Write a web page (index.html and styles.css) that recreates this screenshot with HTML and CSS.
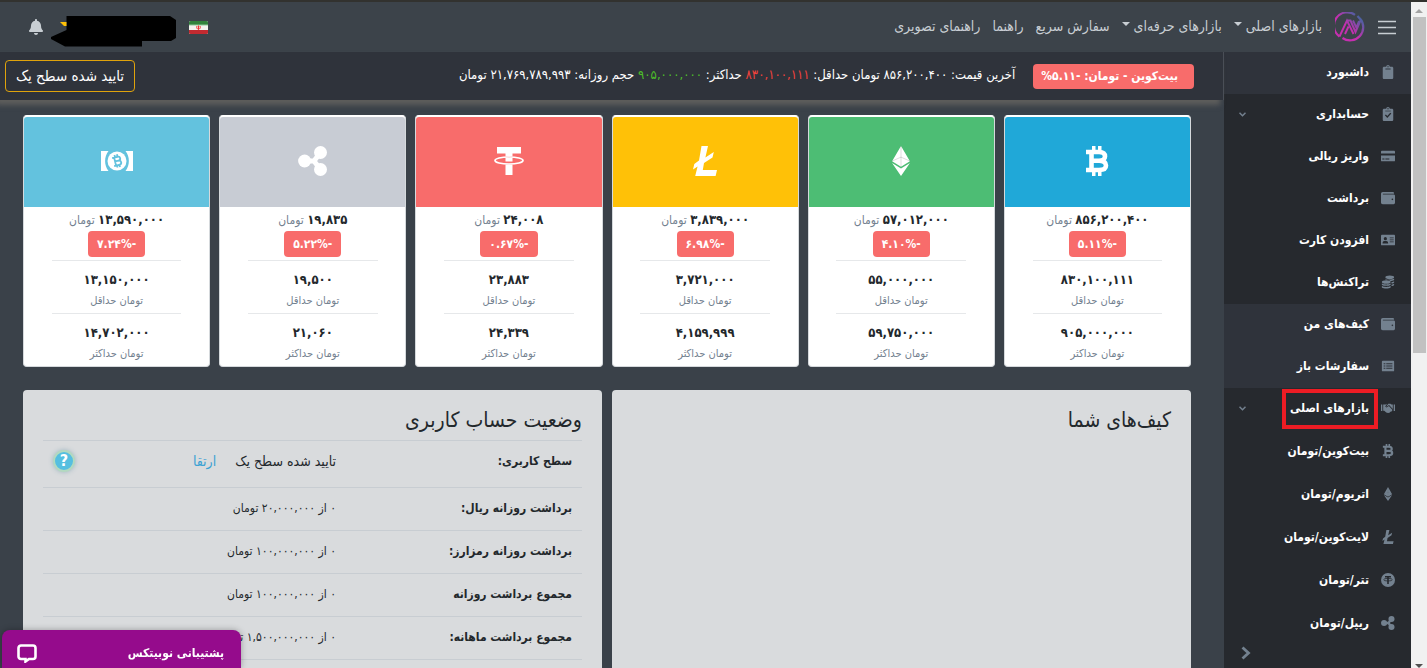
FILE: index.html
```html
<!DOCTYPE html>
<html lang="fa" dir="rtl">
<head>
<meta charset="utf-8">
<title>داشبورد</title>
<link rel="stylesheet" href="styles.css">
</head>
<body>
<svg class="sprite" aria-hidden="true">
  <symbol id="clipboard" viewBox="0 0 384 512"><path d="M384 112v352c0 26.500-21.500 48-48 48H48c-26.500 0-48-21.500-48-48V112c0-26.500 21.500-48 48-48h80c0-35.300 28.700-64 64-64s64 28.700 64 64h80c26.500 0 48 21.500 48 48zM192 40c-13.300 0-24 10.700-24 24s10.700 24 24 24 24-10.700 24-24-10.700-24-24-24m96 114v-20a6 6 0 0 0-6-6H102a6 6 0 0 0-6 6v20a6 6 0 0 0 6 6h180a6 6 0 0 0 6-6z"/></symbol>
  <symbol id="wallet" viewBox="0 0 512 512"><path d="M461.200 128H80c-8.840 0-16-7.160-16-16s7.160-16 16-16h384c8.840 0 16-7.160 16-16 0-26.510-21.490-48-48-48H64C28.650 32 0 60.650 0 96v320c0 35.350 28.650 64 64 64h397.200c28.020 0 50.800-21.530 50.800-48V176c0-26.470-22.780-48-50.800-48zM416 336c-17.670 0-32-14.330-32-32s14.330-32 32-32 32 14.330 32 32-14.330 32-32 32z"/></symbol>
  <symbol id="btc" viewBox="0 0 24 30"><path d="M1 6H14C18.500 6 20 8.200 20 10.500S18 14.700 14 14.700H8M14 14.700C19.500 14.700 21 17 21 19.500S19 24 14 24H1M6.500 6V24" fill="none" stroke="currentColor" stroke-width="4.600"/><path d="M7 0h3.500v6H7zM13 0h3.500v6H13zM7 24h3.500v6H7zM13 24h3.500v6H13z"/></symbol>
  <symbol id="eth" viewBox="0 0 320 512"><path d="M311.900 260.800L160 353.600 8 260.800 160 0zM160 383.400L8 290.600 160 512l152-221.400z"/><path d="M160 0v353M14 255l146-65 146 65" fill="none" stroke="#26292e" stroke-opacity=".2" stroke-width="14"/></symbol>
  <symbol id="ltc" viewBox="0 0 24 30"><path d="M8.500 0H15L12.400 11.400 20.800 6 19.500 11.400 11 17 9.800 24H24L22.600 30H2.200L4.600 20.500 0 23.500 1.300 18 6 14.500z"/></symbol>
  <symbol id="xrp" viewBox="0 0 30 30"><path d="M7 15H17M16 15L22.500 6.500M16 15L22.500 23.500" fill="none" stroke="currentColor" stroke-width="5"/><circle cx="6.600" cy="15" r="6.500"/><circle cx="22.500" cy="6.500" r="6.500"/><circle cx="22.500" cy="23.500" r="6.500"/></symbol>
</svg>
<div class="window">
  <div class="scrollbar" aria-hidden="true">
    <svg width="8" height="4" viewBox="0 0 8 4"><path d="M0 4L4 0 8 4z"/></svg>
    <div class="thumb"></div>
    <svg class="down" width="8" height="4" viewBox="0 0 8 4"><path d="M0 0L4 4 8 0z"/></svg>
  </div>
  <div class="app">
    <header class="topbar">
      <button class="plain menu-btn" aria-label="منو"><svg width="18" height="15" viewBox="0 0 18 15"><path d="M0 1.500h18M0 7.500h18M0 13.500h18" stroke="currentColor" stroke-width="1.500"/></svg></button>
      <a class="logo" href="#" aria-label="نوبیتکس">
        <svg width="30" height="30" viewBox="0 0 30 30">
          <defs><linearGradient id="lg" gradientUnits="userSpaceOnUse" x1="4" y1="26" x2="26" y2="4"><stop offset="0.450" stop-color="#c62fb0"/><stop offset="1" stop-color="#3c679f"/></linearGradient></defs>
          <path d="M4.500 24.500A13.200 13.200 0 0 1 20 2.800M25 6.500A13.200 13.200 0 0 1 7.500 26M22.500 4L27 9" stroke="url(#lg)" stroke-width="2.200"/>
          <path d="M4.500 24.500L12 8.500 18.500 22M10 22l3.500-7.500M12.500 8.500h3L20.500 20 25.500 8.500M18 8.500L21.300 15.500 24 9" stroke="url(#lg)" stroke-width="1.900"/>
        </svg>
      </a>
      <nav class="nav">
        <a class="drop" href="#">بازارهای اصلی</a>
        <a class="drop" href="#">بازارهای حرفه‌ای</a>
        <a href="#">سفارش سریع</a>
        <a href="#">راهنما</a>
        <a href="#">راهنمای تصویری</a>
      </nav>
      <div class="account">
        <svg class="flag" width="19" height="13" viewBox="0 0 19 13"><rect width="19" height="13" rx="1.500" fill="#f4f2ee"/><path d="M1.500 0h16a1.500 1.500 0 0 1 1.500 1.500V4H0V1.500A1.500 1.500 0 0 1 1.500 0z" fill="#31823b"/><path d="M0 9h19v2.500a1.500 1.500 0 0 1-1.500 1.500h-16A1.500 1.500 0 0 1 0 11.500z" fill="#c22a30"/><path d="M0 4h19" stroke="#8fc79a"/><path d="M8 5c-.8 2 .3 3 1.500 3.500C10.700 8 11.800 7 11 5M9.500 4.500v4" stroke="#e33" fill="none"/></svg>
        <svg class="username" width="126" height="31" viewBox="0 0 126 31"><path d="M15.500 0H119L125 4V22L120 25H91V30.500H14L0 23V21L15.500 14z" fill="#000"/><path d="M9 6h6.500v4h-2.500z" fill="#ffc107"/></svg>
        <button class="plain bell" aria-label="اعلان‌ها"><svg width="14" height="16" viewBox="0 0 448 512"><path d="M224 512c35.320 0 63.970-28.650 63.970-64H160.030c0 35.350 28.650 64 63.970 64zm215.390-149.710c-19.320-20.760-55.470-51.990-55.470-154.290 0-77.700-54.480-139.900-127.940-155.160V32c0-17.670-14.320-32-31.980-32s-31.980 14.330-31.980 32v20.840C118.560 68.100 64.080 130.300 64.080 208c0 102.300-36.150 133.530-55.470 154.290-6 6.450-8.660 14.160-8.610 21.710.11 16.400 12.980 32 32.100 32h383.800c19.120 0 32-15.600 32.100-32 .05-7.550-2.610-15.270-8.610-21.710z"/></svg></button>
      </div>
    </header>
    <div class="body">
      <aside class="sidebar">
        <a class="item light" href="#"><svg class="ico"><use href="#clipboard"/></svg><span>داشبورد</span></a>
        <a class="item" href="#"><svg class="ico" viewBox="0 0 16 16"><use href="#clipboard"/><path d="M5 9l2.200 2.300L11.200 7" fill="none" stroke="#26292e" stroke-width="1.600"/><path d="M5 4h6v1H5z" /></svg><span>حسابداری</span><svg class="chev" width="7" height="5" viewBox="0 0 7 5"><path d="M.5.800l3 3 3-3"/></svg></a>
        <a class="item" href="#"><svg class="ico" viewBox="0 0 16 16"><path d="M1 2h14a1 1 0 0 1 1 1v2H0V3a1 1 0 0 1 1-1zM0 7.500h16V13a1 1 0 0 1-1 1H1a1 1 0 0 1-1-1z"/><path d="M1.500 11.500h2.500M5 11.500h4.500" stroke="#26292e" stroke-width="1.200"/></svg><span>واریز ریالی</span></a>
        <a class="item" href="#"><svg class="ico"><use href="#wallet"/></svg><span>برداشت</span></a>
        <a class="item" href="#"><svg class="ico" viewBox="0 0 16 16"><rect y="2" width="16" height="12" rx="1"/><g fill="#26292e"><circle cx="5" cy="6.500" r="1.800"/><path d="M1.800 12c0-3 1.500-3 3.200-3s3.200 0 3.200 3zM10 5h4.500v1H10zM10 7.300h4.500v1H10zM10 9.600h4.500v1H10z"/></g></svg><span>افزودن کارت</span></a>
        <a class="item" href="#"><svg class="ico" viewBox="0 0 16 16"><ellipse cx="10" cy="2.500" rx="5" ry="2"/><path d="M5 4.300c2 1.200 8 1.200 10 0v1.500c-1 1-3 1.200-4 1.200C9 5.300 6 5 5 5.300zM12 8c1.500 0 2.500-.5 3-1v1.500c-.5.700-1.500 1-3 1.200zM12 11c1.500-.2 2.500-.5 3-1v1.500c-.5.700-1.500 1-3 1.200z"/><ellipse cx="6" cy="8" rx="5" ry="2"/><path d="M1 9.800c2 1.300 8 1.300 10 0v1.500c-2 1.300-8 1.300-10 0zM1 12.700c2 1.300 8 1.300 10 0v1.500c-2 1.500-8 1.500-10 0z"/></svg><span>تراکنش‌ها</span></a>
        <a class="item light" href="#"><svg class="ico"><use href="#wallet"/></svg><span>کیف‌های من</span></a>
        <a class="item light" href="#"><svg class="ico" viewBox="0 0 16 16"><rect x="1" y="2" width="14" height="12" rx="1"/><path d="M3 5.500h2M6 5.500h7M3 8h2M6 8h7M3 10.500h2M6 10.500h7" stroke="#2f333b" stroke-width="1.200"/></svg><span>سفارشات باز</span></a>
        <a class="item" href="#"><svg class="ico" viewBox="0 0 16 16"><path d="M0 4h1.500v7.500H0zM14.500 4H16v7.500h-1.500z"/><path d="M2.500 4h2.800L7 3.200 4.800 6.200l1.600 1.200L9 5.700l4.200 4.500L12 12l-1.300.3-1 1.200L8 13.700 6 13.200 3.700 11.200H2.500zM8.300 3h2.500l1.200 1h1.500v5.200L9.200 4.700 6.300 6.500 6 6.200z"/></svg><span class="marked">بازارهای اصلی</span><svg class="chev" width="7" height="5" viewBox="0 0 7 5"><path d="M.5.800l3 3 3-3"/></svg></a>
        <a class="item sub" href="#"><svg class="ico"><use href="#btc"/></svg><span>بیت‌کوین/تومان</span></a>
        <a class="item sub" href="#"><svg class="ico"><use href="#eth"/></svg><span>اتریوم/تومان</span></a>
        <a class="item sub" href="#"><svg class="ico"><use href="#ltc"/></svg><span>لایت‌کوین/تومان</span></a>
        <a class="item sub" href="#"><svg class="ico" viewBox="0 0 14 14"><circle cx="7" cy="7" r="7"/><path d="M4 3.800h6M7 3.800V11" stroke="#26292e" stroke-width="1.600"/><ellipse cx="7" cy="6.700" rx="4.300" ry="1.300" fill="none" stroke="#26292e" stroke-width=".8"/></svg><span>تتر/تومان</span></a>
        <a class="item sub" href="#"><svg class="ico"><use href="#xrp"/></svg><span>ریپل/تومان</span></a>
        <button class="plain minimize" aria-label="جمع کردن منو"><svg width="10" height="14" viewBox="0 0 10 14"><path d="M1.500 1.500L7.500 7l-6 5.500" fill="none" stroke="currentColor" stroke-width="2.800"/></svg></button>
      </aside>
      <main class="main">
        <div class="ticker">
          <strong class="pill">بیت‌کوین - تومان: <bdi dir="ltr">%۵.۱۱-</bdi></strong>
          <p class="stats">آخرین قیمت: ۸۵۶,۲۰۰,۴۰۰ تومان حداقل: <span class="low">۸۳۰,۱۰۰,۱۱۱</span> حداکثر: <span class="high">۹۰۵,۰۰۰,۰۰۰</span> حجم روزانه: ۲۱,۷۶۹,۷۸۹,۹۹۳ تومان</p>
          <button class="level">تایید شده سطح یک</button>
        </div>
        <div class="content">
          <section class="cards">
            <article class="card">
              <div class="head blue"><svg width="24" height="30"><use href="#btc"/></svg></div>
              <p class="price"><b>۸۵۶,۲۰۰,۴۰۰</b> تومان</p>
              <span class="badge" dir="ltr">۵.۱۱%-</span>
              <div class="stat"><b>۸۳۰,۱۰۰,۱۱۱</b><small>تومان حداقل</small></div>
              <div class="stat"><b>۹۰۵,۰۰۰,۰۰۰</b><small>تومان حداکثر</small></div>
            </article>
            <article class="card">
              <div class="head green"><svg width="20" height="30"><use href="#eth"/></svg></div>
              <p class="price"><b>۵۷,۰۱۲,۰۰۰</b> تومان</p>
              <span class="badge" dir="ltr">۴.۱۰%-</span>
              <div class="stat"><b>۵۵,۰۰۰,۰۰۰</b><small>تومان حداقل</small></div>
              <div class="stat"><b>۵۹,۷۵۰,۰۰۰</b><small>تومان حداکثر</small></div>
            </article>
            <article class="card">
              <div class="head yellow"><svg width="24" height="30"><use href="#ltc"/></svg></div>
              <p class="price"><b>۳,۸۳۹,۰۰۰</b> تومان</p>
              <span class="badge" dir="ltr">۶.۹۸%-</span>
              <div class="stat"><b>۳,۷۲۱,۰۰۰</b><small>تومان حداقل</small></div>
              <div class="stat"><b>۴,۱۵۹,۹۹۹</b><small>تومان حداکثر</small></div>
            </article>
            <article class="card">
              <div class="head red"><svg width="30" height="30" viewBox="0 0 30 30"><path d="M3 1h24v6.500h-8.500v3h-7v-3H3zM11.500 12h7v3.500h-7zM11.500 18.500h7V29h-7z"/><ellipse cx="15" cy="14.500" rx="14" ry="3.500" fill="none" stroke="#fff" stroke-width="1.700"/></svg></div>
              <p class="price"><b>۲۴,۰۰۸</b> تومان</p>
              <span class="badge" dir="ltr">۰.۶۷%-</span>
              <div class="stat"><b>۲۳,۸۸۳</b><small>تومان حداقل</small></div>
              <div class="stat"><b>۲۴,۳۳۹</b><small>تومان حداکثر</small></div>
            </article>
            <article class="card">
              <div class="head gray"><svg width="30" height="30"><use href="#xrp"/></svg></div>
              <p class="price"><b>۱۹,۸۳۵</b> تومان</p>
              <span class="badge" dir="ltr">۵.۲۲%-</span>
              <div class="stat"><b>۱۹,۵۰۰</b><small>تومان حداقل</small></div>
              <div class="stat"><b>۲۱,۰۶۰</b><small>تومان حداکثر</small></div>
            </article>
            <article class="card">
              <div class="head sky"><svg width="32" height="20" viewBox="0 0 32 20"><path d="M0 0h7.500C3 5.500 3 14.500 7.500 20H0zM32 0h-7.500c4.500 5.500 4.500 14.500 0 20H32z"/><circle cx="16" cy="10" r="9.500"/><g transform="rotate(-14 16 10)" fill="none" stroke="#63c2de" stroke-width="1.800"><path d="M12 6h5.500c3 0 3 4 0 4H14M17 10c3.700 0 3.700 4.300 0 4.300H12M14 6v8.300M15 3.500V6M17.500 3.500V6M15 14v2.500M17.500 14v2.500"/></g></svg></div>
              <p class="price"><b>۱۳,۵۹۰,۰۰۰</b> تومان</p>
              <span class="badge" dir="ltr">۷.۲۴%-</span>
              <div class="stat"><b>۱۳,۱۵۰,۰۰۰</b><small>تومان حداقل</small></div>
              <div class="stat"><b>۱۴,۷۰۲,۰۰۰</b><small>تومان حداکثر</small></div>
            </article>
          </section>
          <div class="panels">
            <section class="panel"><h2>کیف‌های شما</h2></section>
            <section class="panel">
              <h2>وضعیت حساب کاربری</h2>
              <table>
                <tr class="first"><th scope="row">سطح کاربری:</th><td><div class="cell"><span>تایید شده سطح یک</span><a href="#">ارتقا</a><button class="help" aria-label="راهنما">?</button></div></td></tr>
                <tr><th scope="row">برداشت روزانه ریال:</th><td>۰ از ۲۰,۰۰۰,۰۰۰ تومان</td></tr>
                <tr><th scope="row">برداشت روزانه رمزارز:</th><td>۰ از ۱۰۰,۰۰۰,۰۰۰ تومان</td></tr>
                <tr><th scope="row">مجموع برداشت روزانه</th><td>۰ از ۱۰۰,۰۰۰,۰۰۰ تومان</td></tr>
                <tr><th scope="row">مجموع برداشت ماهانه:</th><td>۰ از ۱,۵۰۰,۰۰۰,۰۰۰ تومان</td></tr>
              </table>
            </section>
          </div>
        </div>
      </main>
    </div>
  </div>
</div>
<button class="chat"><span>پشتیبانی نوبیتکس</span><svg width="20" height="19" viewBox="0 0 20 19"><path d="M4 1.500h12a2.500 2.500 0 0 1 2.500 2.500v8.500A2.500 2.500 0 0 1 16 15h-4l-3.500 2.500V15H4a2.500 2.500 0 0 1-2.500-2.500V4A2.500 2.500 0 0 1 4 1.500z" fill="none" stroke="#fff" stroke-width="2.600"/></svg></button>
</body>
</html>
```
FILE: styles.css
```css
* { box-sizing: border-box; }
body {
  margin: 0;
  height: 100vh;
  overflow: hidden;
  background: #3a4149;
  color: #23282c;
  font: 12px/20px "DejaVu Sans Condensed", "DejaVu Sans", sans-serif;
}
a { color: inherit; text-decoration: none; }
p, h2 { margin: 0; }
button { font: inherit; color: inherit; cursor: pointer; }
.plain { display: flex; padding: 0; border: 0; background: none; }
.sprite { position: absolute; width: 0; height: 0; }
svg { fill: currentColor; flex: none; }

.window { display: flex; height: 100vh; border-top: 2px solid #32322f; }
.scrollbar {
  display: flex; flex-direction: column; align-items: center;
  width: 16px; padding: 7px 0 0; background: #f1f1f1; color: #a3a3a3;
}
.thumb { width: 13px; height: 51%; margin-top: 4px; background: #c1c1c1; }
.down { margin-top: auto; color: #505050; }
.app { flex: 1; min-width: 0; display: flex; flex-direction: column; }

.topbar {
  display: flex; align-items: center; height: 50px; flex: none;
  padding: 0 15px 0 29px; background: #3c434a; color: #c8ced3;
}
.logo { display: flex; margin-right: 13px; }
.logo svg { fill: none; }
.nav { display: flex; gap: 12px; margin-right: 13px; padding-bottom: 3px; font-size: 14px; }
.nav a { white-space: nowrap; }
.drop::after {
  content: ""; display: inline-block; margin-right: 4px; vertical-align: 5px;
  border: 4px solid transparent; border-top-color: currentColor; border-bottom: 0;
}
.account { display: flex; align-items: center; margin-right: auto; }
.username { margin: 8px 12px 0 8px; }

.body { flex: 1; min-height: 0; display: flex; }
.sidebar {
  position: relative; width: 187px; flex: none; overflow: hidden;
  background: #26292e; color: #fff; font-weight: bold;
}
.item { display: flex; align-items: center; gap: 11px; height: 42px; padding: 0 15px 2px; }
.item.light { background: #2f333b; }
.item.sub { height: 43px; }
.item span { white-space: nowrap; }
.ico { width: 16px; height: 14px; color: #73818f; }
.chev { margin-right: auto; fill: none; stroke: #73818f; stroke-width: 1.5; }
.marked { position: relative; }
.marked::after { content: ""; position: absolute; inset: -9px -9px -11px -8px; border: 4px solid #ed1c24; }
.minimize { position: absolute; bottom: 0; left: 0; width: 100%; height: 30px; justify-content: flex-end; align-items: center; padding-left: 17px; color: #73818f; }

.main { flex: 1; min-width: 0; display: flex; flex-direction: column; }
.ticker {
  position: relative; display: flex; align-items: center; height: 48px; flex: none;
  padding: 0 29px 0 5px; background: #2f333b; color: #fff;
  border-right: 1px solid #4a4f57; box-shadow: -4px 5px 5px #5e5e5c;
}
.pill, .badge { background: #f86c6b; color: #fff; border-radius: 4px; font-weight: bold; }
.pill { padding: 2px 16px 3px 8px; white-space: nowrap; }
.stats { margin-right: 18px; padding-bottom: 2px; white-space: nowrap; font-size: 13px; }
.low { color: #f0423c; }
.high { color: #4dbd2a; }
.level { margin-right: auto; height: 32px; padding: 0 10px; background: none; border: 1px solid #e0a30c; border-radius: 4px; font-size: 15px; line-height: 26px; }

.content { padding: 15px 33px 0 23px; }
.cards { display: grid; grid-template-columns: repeat(6, 1fr); gap: 9px; }
.card {
  display: flex; flex-direction: column; align-items: center;
  background: #fff; border: 1px solid #d5d9dc; border-top-color: #fff; border-radius: 4px;
  padding-top: 1px;
}
.head { display: flex; align-items: center; justify-content: center; width: 100%; height: 90px; padding-bottom: 2px; color: #fff; border-radius: 3px 3px 0 0; }
.blue { background: #20a8d8; }
.green { background: #4dbd74; }
.yellow { background: #ffc107; }
.red { background: #f86c6b; }
.gray { background: #c8ccd4; }
.sky { background: #63c2de; }
.price { padding-top: 2px; line-height: 22px; color: #73818f; }
.price b { color: #23282c; font-size: 13px; }
.badge { height: 26px; padding: 0 9px; line-height: 26px; margin-bottom: 3px; }
.stat {
  display: flex; flex-direction: column; align-items: center;
  width: 70%; height: 53px; padding-top: 8px; border-top: 1px solid #e6e8ea;
}
.stat b { font-size: 13px; line-height: 22px; }
.stat small { font-size: 11px; line-height: 20px; color: #73818f; }

.panels { display: grid; grid-template-columns: 1fr 1fr; gap: 10px; margin-top: 23px; }
.panel { min-height: 300px; padding: 16px 20px; background: #d9dbdd; border-radius: 4px; }
.panel h2 { font-size: 21px; line-height: 28px; font-weight: normal; margin-bottom: 6px; }
table { width: 100%; border-collapse: collapse; }
tr { height: 43px; border-top: 1px solid #c8cdd2; border-bottom: 1px solid #c8cdd2; }
.first { height: 47px; }
th, td { padding: 0 10px 2px; text-align: right; white-space: nowrap; }
.first th, .first td { padding-bottom: 6px; }
th { width: 236px; }
.cell { display: flex; align-items: center; gap: 19px; font-size: 14px; }
.cell a { color: #3ba1d3; }
.help {
  width: 22px; height: 22px; margin-right: auto; padding: 0; border: 2px solid #b3d9c0; border-radius: 50%;
  background: #56bfe0; color: #fff; font-size: 16px; line-height: 18px; font-weight: bold; box-shadow: 0 0 5px #9db6c0;
}

.chat {
  position: fixed; left: 2px; bottom: 0; display: flex; align-items: center; justify-content: space-between;
  width: 239px; height: 38px; padding: 8px 17px 0 15px; border: 0; border-radius: 8px 8px 0 0;
  background: #950b8c; color: #fff; font-weight: bold; box-shadow: 0 0 6px rgba(0, 0, 0, .3);
}
```
